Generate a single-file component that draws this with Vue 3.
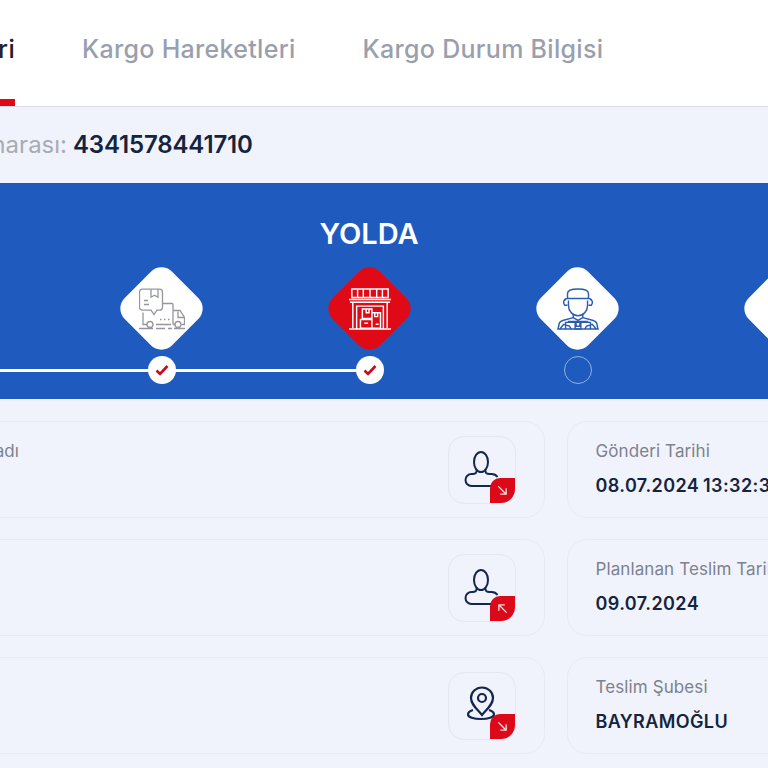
<script setup>
const rows = [
  { label: 'Gönderici adı', icon: 'person', arrow: 'down', rlabel: 'Gönderi Tarihi', rvalue: '08.07.2024 13:32:35' },
  { label: 'Alıcı adı', icon: 'person', arrow: 'up', rlabel: 'Planlanan Teslim Tarihi', rvalue: '09.07.2024' },
  { label: 'Çıkış Yeri', icon: 'pin', arrow: 'down', rlabel: 'Teslim Şubesi', rvalue: 'BAYRAMOĞLU' }
]
</script>

<template>
  <div class="viewport">
    <div class="page">
      <nav class="tabs">
        <div class="tab active">Gönderi Bilgileri</div>
        <div class="tab">Kargo Hareketleri</div>
        <div class="tab">Kargo Durum Bilgisi</div>
      </nav>

      <div class="track-no">
        <span class="track-label">Kargo Takip Numarası:</span>
        <strong>4341578441710</strong>
      </div>

      <section class="banner">
        <h2>YOLDA</h2>
        <div class="steps">
          <div class="step done first">
            <div class="diamond"><svg viewBox="0 0 46 41" class="ico gray" fill="none" stroke="currentColor" stroke-width="1.300">
              <path d="M3.500.7h17a3 3 0 0 1 3 3v15a3 3 0 0 1-3 3h-2.500l-3 4.500-3-4.500H3.500a3 3 0 0 1-3-3v-15a3 3 0 0 1 3-3z"/>
              <path d="M12 .7v8l3.500-2 3.500 2v-8M5 12h4M5 16h5"/>
              <path d="M23.500 15H33a1 1 0 0 1 1 1v20M34 22h7l4.500 7v7h-3M34 36h2M17 36h15M8 36H4V24"/>
              <circle cx="11" cy="36" r="3"/><circle cx="39" cy="36" r="3"/>
              <path d="M39 23v6h6M21 31h1.500M25 31h1.500M29 31h1.500M0 40h14M17 40h9M29 40h4M35 40h11"/>
            </svg></div>
            <div class="dot"><svg viewBox="0 0 14 12" class="check"><path d="M1.500 6.500 5 10l7.500-8" fill="none" stroke="currentColor" stroke-width="2.600"/></svg></div>
          </div>
          <div class="step done">
            <div class="diamond redbg"><svg viewBox="0 0 44 44" class="ico white" fill="none" stroke="currentColor" stroke-width="1.500">
              <path d="M3 1h38v9H3zM9 1v9M15 1v9M22 1v9M29 1v9M35 1v9M0 12h44M1 15h42M4 15v27M40 15v27M0 43h44"/>
              <path d="M8 43V19h28v24"/>
              <path d="M14 22h10v10H14zM18 22v4h3v-4M24 26h9v16h-9M27 26v4h3v-4M12 33h12v9H12zM16 37h4M28 38h3"/>
            </svg></div>
            <div class="dot"><svg viewBox="0 0 14 12" class="check"><path d="M1.500 6.500 5 10l7.500-8" fill="none" stroke="currentColor" stroke-width="2.600"/></svg></div>
          </div>
          <div class="step">
            <div class="diamond"><svg viewBox="0 0 44 44" class="ico blue" fill="none" stroke="currentColor" stroke-width="1.500">
              <path d="M11 11V6c0-3 3-5 11-5s11 2 11 5v5zM8 13c0-1.500 1-2 3-2h22c2 0 3 .5 3 2"/>
              <path d="M12 13v5c0 6 4 11 10 11s10-5 10-11v-5"/>
              <path d="M9 12c-2 1-3 3-1 6h3M35 12c2 1 3 3 1 6h-3"/>
              <path d="M17 27v4l5 3 5-3v-4"/>
              <path d="M17 31 6 34c-3 1-4 3-4 5l-1 4h42l-1-4c0-2-1-4-4-5l-11-3"/>
              <path d="M9 43v-7h26v7M12 36v-1h20v1M19 36v7h6v-7M20 36v4h4v-4M3 43l4-5 6 2 2 3M41 43l-4-5-6 2-2 3"/>
            </svg></div>
            <div class="dot empty"></div>
          </div>
          <div class="step">
            <div class="diamond"><svg viewBox="0 0 44 44" class="ico dark" fill="none" stroke="currentColor" stroke-width="1.500">
              <path d="M4 31h5M4 37h5M14 14l14-10 14 10v24H14z"/>
            </svg></div>
            <div class="dot empty"></div>
          </div>
        </div>
      </section>

      <section class="grid">
        <template v-for="r in rows" :key="r.rlabel">
          <div class="card left">
            <span class="label">{{ r.label }}</span>
            <div class="icon-box">
              <svg v-if="r.icon === 'person'" viewBox="1 1 66 66" class="glyph" fill="none" stroke="currentColor" stroke-width="2">
                <ellipse cx="33" cy="26" rx="7" ry="10"/>
                <path d="M28.500 34.500c0 3-1 3.500-4 3.500h-1a6 6 0 0 0 0 12H43"/>
                <path d="M37.500 34.500c0 3 1 3.500 4 3.500h2c3 0 5 1.500 6 3"/>
              </svg>
              <svg v-else viewBox="1 1 66 66" class="glyph" fill="none" stroke="currentColor" stroke-width="2.200">
                <path d="M34 43c-6-7-11-11-11-17a11 10.500 0 0 1 22 0c0 6-5 10-11 17z"/>
                <circle cx="34" cy="26" r="4"/>
                <path d="M25 38c-3.500 1-5 2.500-5 4.500 0 2.500 5.500 4.500 13 4.500s13-2 13-4.500c0-2-1.500-3.500-5-4.500"/>
              </svg>
              <span class="badge">
                <svg viewBox="0 0 12 12" :class="['arrow', r.arrow]" fill="none" stroke="currentColor" stroke-width="1.500">
                  <path d="M1.500 1.500 10 10M10 3.500V10H3.500"/>
                </svg>
              </span>
            </div>
          </div>
          <div class="card right">
            <span class="label">{{ r.rlabel }}</span>
            <b class="value">{{ r.rvalue }}</b>
          </div>
        </template>
      </section>
    </div>
  </div>
</template>

<style scoped>
.viewport {
  width: 768px;
  height: 768px;
  overflow: hidden;
  background: #f0f3fb;
  font-family: Inter, "Noto Sans", sans-serif;
}
.page {
  width: 1138px;
  margin-left: -200px;
}
.tabs {
  display: flex;
  gap: 67px;
  height: 107px;
  background: #fff;
  border-bottom: 1px solid #dcdde2;
  box-sizing: border-box;
}
.tab {
  height: 106px;
  line-height: 98px;
  font-size: 25px;
  letter-spacing: .3px;
  font-weight: 500;
  color: #9a9fae;
  white-space: nowrap;
  box-sizing: border-box;
}
.tab.active {
  width: 215px;
  flex: none;
  display: flex;
  justify-content: flex-end;
  color: #1a2030;
  border-bottom: 7px solid #e00a16;
}
.track-no {
  height: 76px;
  box-sizing: border-box;
  display: flex;
  align-items: center;
  gap: 6px;
  font-size: 24px;
  padding-bottom: 1px;
}
.track-label {
  width: 267px;
  flex: none;
  display: flex;
  justify-content: flex-end;
  white-space: nowrap;
  color: #a8abb4;
}
.track-no strong {
  color: #14233f;
  font-weight: 600;
  letter-spacing: -.15px;
}
.banner {
  height: 216px;
  background: #1f5bbf;
  box-sizing: border-box;
  padding-top: 34px;
}
.banner h2 {
  margin: 0;
  text-align: center;
  font-size: 29px;
  line-height: 34px;
  font-weight: 600;
  color: #fff;
}
.steps {
  display: flex;
  margin-top: 16px;
  padding-left: 257.500px;
}
.step {
  width: 208px;
  flex: none;
  display: flex;
  flex-direction: column;
  align-items: center;
  position: relative;
}
.step.done::before {
  content: "";
  position: absolute;
  right: 50%;
  top: 102px;
  width: 208px;
  height: 3px;
  background: #fff;
}
.step.first::before {
  width: 400px;
}
.diamond {
  width: 83px;
  height: 83px;
  position: relative;
  display: flex;
  align-items: center;
  justify-content: center;
}
.diamond::before {
  content: "";
  position: absolute;
  left: 8px;
  top: 8px;
  width: 67px;
  height: 67px;
  background: #fff;
  border-radius: 15px;
  transform: rotate(45deg);
}
.diamond.redbg::before {
  background: #e00a16;
}
.ico {
  position: relative;
  width: 46px;
  height: 42px;
}
.gray { color: #96979d; }
.white { color: #fff; }
.blue { color: #2a5cb0; }
.dark { color: #33415c; }
.dot {
  position: relative;
  z-index: 1;
  margin-top: 6px;
  width: 28px;
  height: 28px;
  border-radius: 50%;
  background: #fff;
  display: flex;
  align-items: center;
  justify-content: center;
  color: #c90a1e;
}
.dot.empty {
  background: transparent;
  border: 1px solid #8fb0e4;
  box-sizing: border-box;
}
.check {
  width: 14px;
  height: 12px;
}
.grid {
  display: grid;
  grid-template-columns: 666px 666px;
  column-gap: 22px;
  row-gap: 21px;
  margin: 22px 0 0 79px;
}
.card {
  height: 97px;
  box-sizing: border-box;
  border: 1px solid #e7ebf4;
  border-radius: 20px;
  padding: 18px 28px;
  position: relative;
  display: flex;
}
.label {
  font-size: 17px;
  letter-spacing: .1px;
  line-height: 22px;
  color: #7d8190;
  white-space: nowrap;
}
.card.left {
  justify-content: space-between;
  padding-top: 14px;
}
.card.left .label {
  margin: 4px 0 0 3px;
}
.card.right {
  flex-direction: column;
  gap: 12px;
  padding-left: 27.500px;
}
.value {
  font-size: 18px;
  letter-spacing: .4px;
  word-spacing: -1px;
  line-height: 24px;
  font-weight: 600;
  color: #14233f;
  white-space: nowrap;
}
.icon-box {
  width: 68px;
  height: 68px;
  flex: none;
  box-sizing: border-box;
  border: 1px solid #e4e7ef;
  border-radius: 16px;
  position: relative;
  color: #14264e;
}
.glyph {
  display: block;
  width: 66px;
  height: 66px;
}
.badge {
  position: absolute;
  right: 0;
  bottom: 0;
  width: 25px;
  height: 25px;
  background: #dc0a18;
  border-radius: 10px 0 14px 0;
  display: flex;
  align-items: center;
  justify-content: center;
  color: #ffd6d6;
}
.arrow {
  width: 11px;
  height: 11px;
}
.arrow.up {
  transform: rotate(180deg);
}
</style>
